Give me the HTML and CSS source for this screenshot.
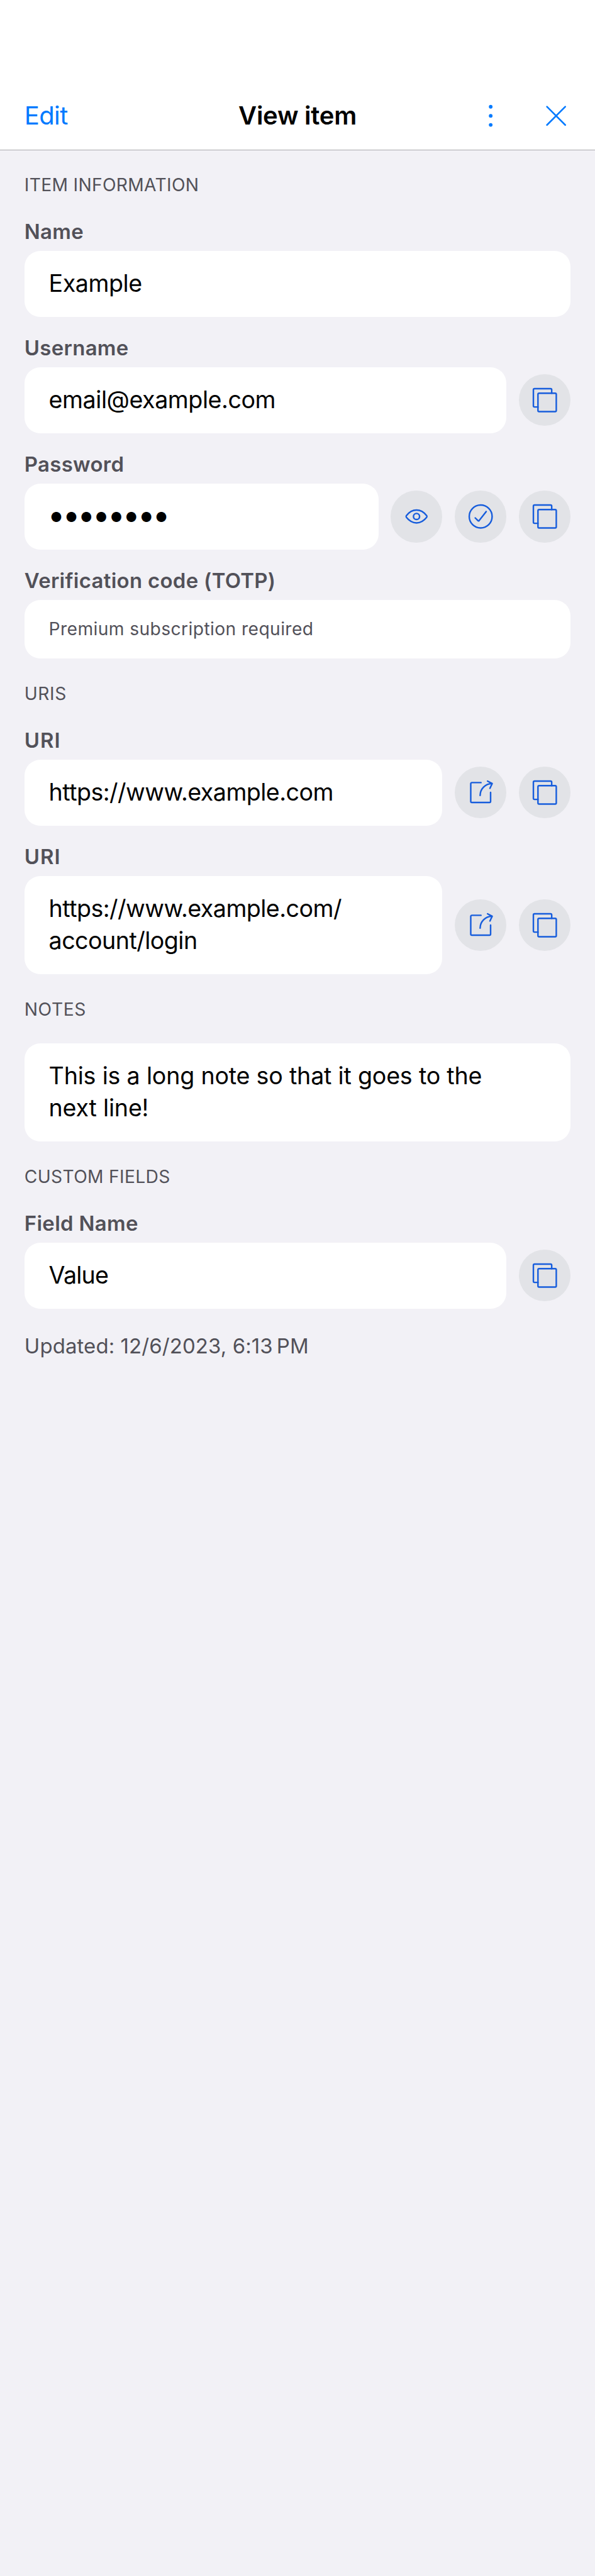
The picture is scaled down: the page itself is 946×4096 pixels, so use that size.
FILE: index.html
```html
<!DOCTYPE html>
<html lang="en">
<head>
<meta charset="utf-8">
<title>View item</title>
<link rel="stylesheet" href="styles.css">
</head>
<body>
<svg class="sprite" aria-hidden="true">
  <symbol id="copy" viewBox="0 0 102 102">
    <rect x="37.5" y="37.5" width="36" height="36" rx="2.2"/>
    <path d="M37.5 64.5H30.7a2.2 2.2 0 0 1-2.2-2.2V30.7a2.2 2.2 0 0 1 2.2-2.2H62.3a2.2 2.2 0 0 1 2.2 2.2V37.5"/>
  </symbol>
  <symbol id="check" viewBox="0 0 102 102">
    <circle cx="51" cy="51" r="22.5"/>
    <path d="M40.3 53.8L46 59.4Q47 60.2 47.9 59.2L61.8 41.3"/>
  </symbol>
  <symbol id="eye" viewBox="0 0 102 102">
    <circle cx="51" cy="51" r="6"/>
    <path d="M31 49.4C36.2 42.8 43 38.4 51 38.4S65.8 42.8 71 49.4Q72.2 51 71 52.6C65.8 59.2 59 63.6 51 63.6S36.2 59.2 31 52.6Q29.8 51 31 49.4Z"/>
  </symbol>
  <symbol id="launch" viewBox="0 0 102 102">
    <path d="M51.6 31.4H33.7a2.2 2.2 0 0 0-2.2 2.2V68.3a2.2 2.2 0 0 0 2.2 2.2H68.3a2.2 2.2 0 0 0 2.2-2.2V50.6"/>
    <path d="M49.9 56.6C49.9 43.8 60 33.6 73 33.4"/>
    <path d="M64.5 28.5L73.6 33.3L69.2 42.7"/>
  </symbol>
</svg>

<header class="navbar">
  <a class="nav-edit">Edit</a>
  <h1 class="nav-title">View item</h1>
  <div class="nav-actions">
    <svg class="nav-icon" viewBox="0 0 40 40"><g class="dots"><circle cx="20" cy="2.2" r="3.6"/><circle cx="20" cy="20" r="3.6"/><circle cx="20" cy="37.8" r="3.6"/></g></svg>
    <svg class="nav-icon" viewBox="0 0 40 40"><path class="cross" d="M2 2L38 38M38 2L2 38"/></svg>
  </div>
</header>

<main class="content">
  <section class="section">
    <h2 class="section-title">ITEM INFORMATION</h2>
    <div class="fields">
      <div class="field">
        <div class="label">Name</div>
        <div class="row"><div class="card">Example</div></div>
      </div>
      <div class="field">
        <div class="label">Username</div>
        <div class="row">
          <div class="card">email@example.com</div>
          <svg class="action"><use href="#copy"/></svg>
        </div>
      </div>
      <div class="field">
        <div class="label">Password</div>
        <div class="row">
          <div class="card"><span class="mask">●●●●●●●●</span></div>
          <svg class="action"><use href="#eye"/></svg>
          <svg class="action"><use href="#check"/></svg>
          <svg class="action"><use href="#copy"/></svg>
        </div>
      </div>
      <div class="field">
        <div class="label">Verification code (TOTP)</div>
        <div class="row"><div class="card card-small">Premium subscription required</div></div>
      </div>
    </div>
  </section>

  <section class="section">
    <h2 class="section-title short">URIS</h2>
    <div class="fields">
      <div class="field">
        <div class="label uri">URI</div>
        <div class="row">
          <div class="card link">https://www.example.com</div>
          <svg class="action"><use href="#launch"/></svg>
          <svg class="action"><use href="#copy"/></svg>
        </div>
      </div>
      <div class="field">
        <div class="label uri">URI</div>
        <div class="row">
          <div class="card link">https://www.example.com/<br>account/login</div>
          <svg class="action"><use href="#launch"/></svg>
          <svg class="action"><use href="#copy"/></svg>
        </div>
      </div>
    </div>
  </section>

  <section class="section">
    <h2 class="section-title short">NOTES</h2>
    <div class="row"><div class="card note">This is a long note so that it goes to the<br>next line!</div></div>
  </section>

  <section class="section">
    <h2 class="section-title">CUSTOM FIELDS</h2>
    <div class="field">
      <div class="label">Field Name</div>
      <div class="row">
        <div class="card value">Value</div>
        <svg class="action"><use href="#copy"/></svg>
      </div>
    </div>
  </section>

  <p class="updated">Updated: 12/6/2023, 6:13&#8239;PM</p>
</main>
</body>
</html>
```
FILE: styles.css
```css
:root {
  --u: calc(946px / 1170);
}

* {
  box-sizing: border-box;
}

body {
  margin: 0;
  min-height: 4096px;
  background: #f2f1f6;
  color: #000;
  font-family: Inter, "Liberation Sans", sans-serif;
}

.sprite {
  display: none;
}

.navbar {
  display: grid;
  grid-template-columns: 1fr auto 1fr;
  align-items: center;
  height: calc(295 * var(--u));
  padding: calc(163 * var(--u)) calc(56.7 * var(--u)) 0 calc(48 * var(--u));
  background: #fff;
  border-bottom: 1px solid #a9a9ad;
  font-size: calc(49.5 * var(--u));
  line-height: calc(60 * var(--u));
}

.nav-edit {
  color: #007aff;
  letter-spacing: -0.0158em;
}

.nav-title {
  margin: 0 0 0 calc(8.7 * var(--u));
  font-size: inherit;
  font-weight: 600;
  letter-spacing: -0.0065em;
}

.nav-actions {
  display: flex;
  justify-content: flex-end;
  gap: calc(88.8 * var(--u));
}

.nav-icon {
  width: calc(40 * var(--u));
  height: calc(40 * var(--u));
  overflow: visible;
}

.dots {
  fill: #007aff;
}

.cross {
  fill: none;
  stroke: #007aff;
  stroke-width: 3.2;
  stroke-linecap: round;
}

.content {
  padding: calc(47 * var(--u)) calc(48 * var(--u)) 0;
}

.section {
  margin-bottom: calc(48 * var(--u));
}

.section-title {
  margin: 0 0 calc(45 * var(--u));
  color: #525159;
  font-size: calc(34.92 * var(--u));
  font-weight: 400;
  line-height: calc(43 * var(--u));
  letter-spacing: 0.011em;
}

.section-title.short {
  letter-spacing: 0.02em;
}

.fields {
  display: flex;
  flex-direction: column;
  gap: calc(36 * var(--u));
}

.label {
  margin-bottom: calc(13 * var(--u));
  color: #525159;
  font-size: calc(40.74 * var(--u));
  font-weight: 600;
  line-height: calc(50 * var(--u));
  letter-spacing: 0.009em;
}

.label.uri {
  letter-spacing: 0.03em;
}

.row {
  display: flex;
  align-items: center;
  gap: calc(24 * var(--u));
}

.card {
  flex: 1;
  padding: calc(33.5 * var(--u)) calc(48 * var(--u));
  border-radius: calc(31 * var(--u));
  background: #fff;
  font-size: calc(46.56 * var(--u));
  line-height: calc(63 * var(--u));
  letter-spacing: -0.0122em;
  white-space: nowrap;
}

.card-small {
  padding-block: calc(36 * var(--u));
  color: #525159;
  font-size: calc(34.92 * var(--u));
  line-height: calc(43 * var(--u));
  letter-spacing: 0.0139em;
}

.link {
  letter-spacing: -0.0145em;
}

.note {
  letter-spacing: -0.0055em;
}

.value {
  letter-spacing: -0.02em;
}

.mask {
  display: block;
  padding: calc(4 * var(--u)) 0 0 calc(3 * var(--u));
  font-size: 20.8px;
  line-height: calc(59 * var(--u));
  letter-spacing: 4.85px;
}

.action {
  flex: none;
  width: calc(102 * var(--u));
  height: calc(102 * var(--u));
  border-radius: 50%;
  background: #e2e3e7;
  fill: none;
  stroke: #175ddc;
  stroke-width: 3;
  stroke-linecap: round;
  stroke-linejoin: round;
}

.updated {
  margin: 0;
  color: #525159;
  font-size: calc(40.74 * var(--u));
  line-height: calc(50 * var(--u));
  letter-spacing: 0.003em;
}
```
